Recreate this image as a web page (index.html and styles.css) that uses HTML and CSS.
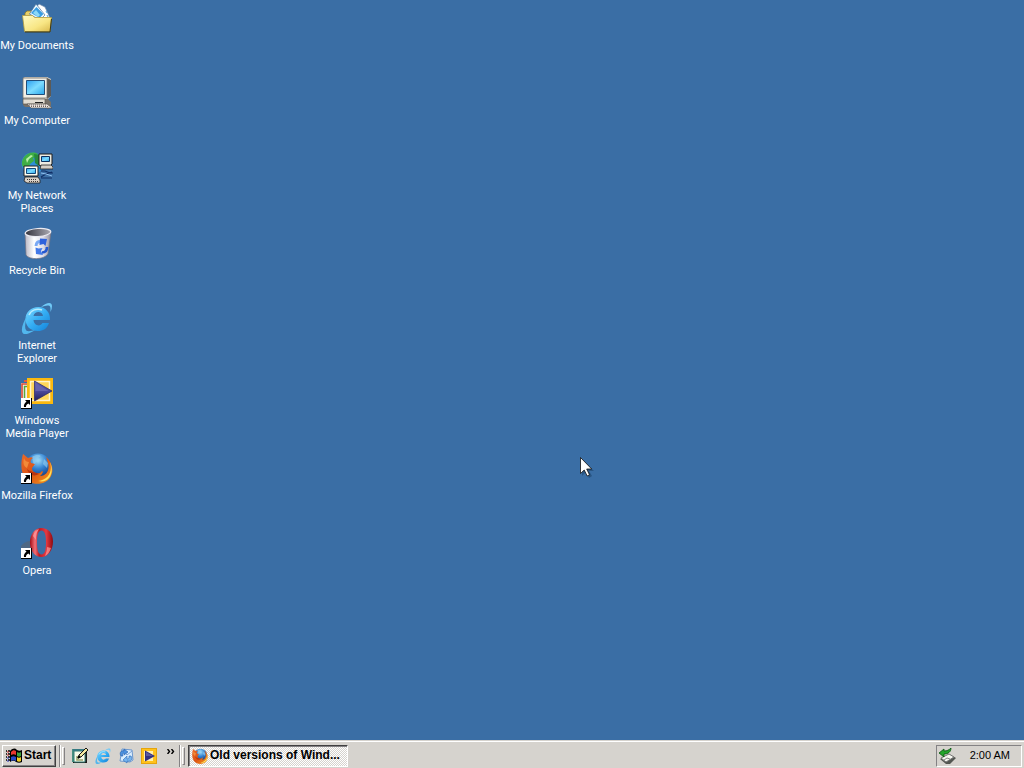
FILE: index.html
```
<!DOCTYPE html>
<html lang="en">
<head>
<meta charset="utf-8">
<title>Desktop</title>
<link rel="stylesheet" href="styles.css">
</head>
<body>
<svg class="defs" aria-hidden="true">
  <defs>
    <linearGradient id="folder" x1="0" y1="0" x2="1" y2="1"><stop offset="0" stop-color="#fffbc4"/><stop offset=".6" stop-color="#f8e684"/><stop offset="1" stop-color="#d9b84a"/></linearGradient>
    <linearGradient id="screen" x1="0" y1="0" x2="1" y2="1"><stop offset="0" stop-color="#2c9ff0"/><stop offset=".5" stop-color="#7ddcff"/><stop offset="1" stop-color="#27a4ea"/></linearGradient>
    <linearGradient id="bin" x1="0" y1="0" x2="1" y2="0"><stop offset="0" stop-color="#b9b7c4"/><stop offset=".35" stop-color="#fff"/><stop offset=".7" stop-color="#dedde8"/><stop offset="1" stop-color="#8e8c9c"/></linearGradient>
    <linearGradient id="binhole" x1="0" y1="0" x2="1" y2="0"><stop offset="0" stop-color="#34333c"/><stop offset="1" stop-color="#aaa9b3"/></linearGradient>
    <linearGradient id="ie" x1="0" y1="0" x2="1" y2="1"><stop offset="0" stop-color="#7fd9ff"/><stop offset=".5" stop-color="#35aef4"/><stop offset="1" stop-color="#1180d8"/></linearGradient>
    <linearGradient id="play" x1="0" y1="0" x2="0" y2="1"><stop offset="0" stop-color="#6464b4"/><stop offset=".5" stop-color="#4c489c"/><stop offset="1" stop-color="#221f5c"/></linearGradient>
    <radialGradient id="globe" cx=".5" cy=".25" r=".7"><stop offset="0" stop-color="#9fdcf8"/><stop offset=".45" stop-color="#3483d2"/><stop offset="1" stop-color="#0b2c74"/></radialGradient>
    <linearGradient id="fox" x1="0" y1="0" x2="1" y2="1"><stop offset="0" stop-color="#e8692a"/><stop offset=".5" stop-color="#dd5413"/><stop offset="1" stop-color="#f39a1d"/></linearGradient>
    <linearGradient id="opera" x1="0" y1="0" x2="1" y2="0"><stop offset="0" stop-color="#a80d14"/><stop offset=".22" stop-color="#f07078"/><stop offset=".4" stop-color="#c01820"/><stop offset=".7" stop-color="#e53a43"/><stop offset="1" stop-color="#8e0a10"/></linearGradient>

    <symbol id="i-shortcut" viewBox="0 0 11 11">
      <path d="M0 0h11v11H0z" fill="#000"/><path d="M0 0h10v10H0z" fill="#fff"/>
      <path d="M4 2h5v5L7.400 5.500C5.500 6.500 5 7.500 5 9H3C2.500 7 3.500 5 5.500 3.700z" fill="#000"/>
    </symbol>

    <symbol id="i-documents" viewBox="0 0 32 32">
      <path d="M4 14V11l2-2h7l2 2h11v4z" fill="#e8d06a" stroke="#8f7a25" stroke-width=".8"/>
      <path d="M8 14 18 2l6 3 5 11-4 6H12z" fill="#fff" stroke="#6585a7" stroke-width=".7"/>
      <path d="M8.500 12 15 2l9 11-5 5z" fill="#eefaff" stroke="#466f9b" stroke-width=".7"/>
      <path d="M10 11l5.500-6 7 7-4 4z" fill="#3a9de2"/><path d="M12 11l3-3 4 5-2 2z" fill="#8bd8f7"/>
      <path d="m25 9 1 2m0 2 1 2" stroke="#4aa6e3"/>
      <path d="M1.500 13.500h10l2 2h17L29 29.500H3.500z" fill="url(#folder)" stroke="#b49d3c" stroke-width=".8"/>
      <path d="M4 30h25l1.500-13" fill="none" stroke="#40380f"/>
    </symbol>

    <symbol id="i-computer" viewBox="0 0 32 32">
      <path d="m2 1 2-1h22l4 2v17l-3 3H3l-1-1z" fill="#d6d2c8"/>
      <path d="M26 1 30 3v16l-4 3z" fill="#5d5a56"/>
      <path d="M2 21V1h24v20H3z" fill="#f2efe6" stroke="#76716a" stroke-width=".8"/>
      <path d="M5.500 3.500h18v14h-18z" fill="url(#screen)" stroke="#214d79"/>
      <path d="M3 22h24l3 3v4l-3 3-3-2H4l-2-2v-3z" fill="#777169"/>
      <path d="M2 22h22v5H2z" fill="#e2ddd3" stroke="#5f5951" stroke-width=".7"/>
      <path d="M14 25.500h8" stroke="#222"/>
      <path d="m6 27h20l5 4H10z" fill="#ece5df" stroke="#504a48" stroke-width=".6"/>
      <path d="m8 28h17m-15 1.500h17" stroke="#6f6360" stroke-dasharray="1 1"/>
    </symbol>

    <symbol id="i-network" viewBox="0 0 32 32">
      <circle cx="11.500" cy="11.500" r="11" fill="#2d8fd6"/>
      <path d="M3 5C6 1 12-1 17 2l-2 3-3 1 1 3-4 3-2 5-5-2C0 12 1 8 3 5z" fill="#3fae45"/>
      <path d="m13 2 6 1 3 6-4 5-4-3z" fill="#26893c"/><path d="M5 7l5-4 2 1-4 3-2 4z" fill="#b9f0a5"/>
      <path d="M18 2h13v10l-2 2h-9l-2-1z" fill="#eeece2" stroke="#1d1c1c"/>
      <path d="M20.500 4.500h8v5h-8z" fill="url(#screen)" stroke="#0d315e"/>
      <path d="M20 13h10l2 2v2H19z" fill="#d6d0c6" stroke="#222" stroke-width=".8"/>
      <path d="M3 14h14v10H3z" fill="#fffdf2" stroke="#222"/>
      <path d="M5.500 16.500h9v5h-9z" fill="url(#screen)" stroke="#124878"/>
      <path d="M4 25h13l2 3v3H6l-3-2z" fill="#d8d0c6" stroke="#222" stroke-width=".8"/>
      <path d="M6 27.500h9m-7 2h9" stroke="#3e3635" stroke-dasharray="1 1"/>
      <path d="M20 19h4l5 2h3m-12 4 5-3 6-2m-11 6h11" fill="none" stroke="#112f67" stroke-width="1.200"/>
      <path d="M20 21l5 1 6 2" fill="none" stroke="#8cbced"/>
    </symbol>

    <symbol id="i-recycle" viewBox="0 0 32 32">
      <path d="M4 6 5 28c3 5 18 5 22-1L30 5z" fill="url(#bin)" stroke="#737283" stroke-width=".7"/>
      <ellipse cx="17" cy="5.500" rx="12.800" ry="4" transform="rotate(-4 17 5.500)" fill="url(#binhole)" stroke="#ecebf2" stroke-width="1.200"/>
      <path d="M15 19c0-3 2-5 5-4.500" fill="none" stroke="#7aa9f5" stroke-width="3"/>
      <path d="M19 11.500l7 .5-1.500 7-2-2-4 1z" fill="#2f62dc"/>
      <path d="M26 20c0 4-2 5.500-5 5.500" fill="none" stroke="#2457cf" stroke-width="2.600"/>
      <path d="M22 28l-7-1-.5-6.500 3 1 4-.5-1.500 3z" fill="#4379e8"/>
    </symbol>

    <symbol id="i-ie" viewBox="0 0 32 32">
      <path d="M29 18H12.500c.5 6 7 7 9 3H28c-2 6-6 8-11 8C9 29 4.500 24 4.500 17S10 5 17.500 5C25 5 29.500 11 29 18zM12.500 14H22c-.4-5-8.500-5.500-9.500 0z" fill="url(#ie)" fill-rule="evenodd"/>
      <path d="M20 5C26 0 31 0 31 4c0 2-.5 4-1.500 6 0-3 .5-6-2-6.500-2-.4-4 .5-7.500 1.500z" fill="#70c9f7"/>
      <path d="M6 14C1 22-1 30 3 32c3 1 8-2 11-4-4 1-8 2-9 0-2-3 0-9 1-14z" fill="#52b7ee"/>
      <path d="M8 13c2-5 8-7 13-5" fill="none" stroke="#b8ecff" stroke-width="1.500"/>
    </symbol>

    <symbol id="i-media" viewBox="0 0 32 32">
      <path d="M0 6h6v20H0z" fill="#f5f1ed"/><path d="M1 22V7h5" fill="none" stroke="#d64a31" stroke-width="1.600"/>
      <path d="M3.500 22V9.500H6" fill="none" stroke="#58a83c" stroke-width="1.500"/><path d="M3 3h4v2H3z" fill="#e15c39"/>
      <path d="M6 1h26v26H6z" fill="#fbb90f"/><path d="M9.500 4.500h19v19h-19z" fill="#ffd659" stroke="#fff3cf" stroke-width="1.500"/>
      <path d="M13.500 4 31 14 13.500 24z" fill="url(#play)" stroke="#22216a" stroke-width=".7"/><path d="M14.500 6v8h13z" fill="#6663ae"/>
    </symbol>

    <symbol id="i-play" viewBox="0 0 16 16">
      <path d="M0 0h16v16H0z" fill="#e6a50c"/><path d="M1 1h14v14H1z" fill="#ffc21c"/><path d="M3 3h9v10H3z" fill="#fff0b3"/>
      <path d="M4 2.500 14 8 4 13.500z" fill="#34317f"/><path d="M5 4v4h7z" fill="#5c5a9d"/>
    </symbol>

    <symbol id="i-firefox" viewBox="0 0 32 32">
      <circle cx="17" cy="15" r="13.500" fill="url(#globe)"/>
      <path d="M11 5c4-3 8-2 9-1l-3 2 3 3-5 1-2 4zM23 7l4 4-1 5-4-4z" fill="#8fcdf1" opacity=".65"/>
      <path d="M2 2c2 1 3 3 5 4 2-1 4-1 5 0-2 1-3 3-2 5l4 1-3 4c0 4 4 6 8 5l2-2c2 0 0 4-2 5 7 0 10-7 8-13l-2-6c6 5 8 13 5 19C26 33 11 35 4 26-1 19 0 9 2 2z" fill="url(#fox)"/>
      <path d="M29 10c3 10-2 18-12 19C28 32 34 20 29 10z" fill="#ffe05b"/>
      <path d="M3 6c1 3 3 4 5 4l-2 6c-4-2-4-6-3-10z" fill="#f28a38"/>
      <path d="M6 17c3 3 8 3 12 5-5 3-10 1-12-5z" fill="#b93410"/>
    </symbol>

    <symbol id="i-opera" viewBox="0 0 32 32">
      <path d="M0 19c3-4 7-5 10-5v13H1z" fill="#5b6470" opacity=".6"/>
      <path fill-rule="evenodd" d="M20.500 1C27 1 32 6 32 14.500S27 30 20.500 30 9 24 9 15.500 14 1 20.500 1zm0 2.500c-3.500 0-4.500 5-4.500 12s1 12 4.500 12 4.500-5 4.500-12-1-12-4.500-12z" fill="url(#opera)"/>
      <path d="M12 9c1-4 3-6 6-7-3 4-3 8-3 11" fill="#ff979c" opacity=".8"/>
      <path d="m26 20 4 1c-1 4-4 7-6 8 1-3 2-5 2-9z" fill="#ffa5a5" opacity=".65"/>
    </symbol>

    <symbol id="i-windows" viewBox="0 0 17 16">
      <path d="M0 3h1m1 0h2M0 6h1m1 0h2M0 9h1m1 0h2M0 12h1m1 0h2" stroke="#000" stroke-width="1.400"/>
      <path d="M4 3c3-3 5-3 7-1 2 1 3 1 5 0v12c-2 1-4 1-6 0-2-2-4-1-6 0z" fill="#000"/>
      <path d="M5 4c2-2 3-2 5-1v4C8 6 7 6 5 7z" fill="#e9382f"/><path d="M11 4c1 1 3 1 4 0v4c-1 1-3 1-4 0z" fill="#3aa13c"/>
      <path d="M5 9c2-1 3-1 5 0v4c-2-1-3-1-5 0z" fill="#2848c5"/><path d="M11 9c1 1 3 1 4 0v4c-1 1-3 1-4 0z" fill="#f1cf29"/>
      <path d="M1 4h2M1 7h2" stroke="#d42d2d"/><path d="M1 10h2M1 13h2" stroke="#2936bd"/>
    </symbol>

    <symbol id="i-show" viewBox="0 0 16 16">
      <path d="M1 2h14v13H1z" fill="#1d1d1a"/><path d="M0 1h3v13H0z" fill="#488f80"/><path d="M2 3h11v11H2z" fill="#f8fbea" stroke="#347d77"/>
      <path d="M1 2h12" stroke="#367a83" stroke-width="2"/><path d="M5 8v4h6" fill="none" stroke="#98a16a" stroke-width="1.500"/>
      <path d="m6 10 1-3 7-7 2 2-7 7z" fill="#f4e9a0" stroke="#181818"/><path d="M6 10l2-2" stroke="#000" stroke-width="2"/>
    </symbol>

    <symbol id="i-outlook" viewBox="0 0 16 16">
      <path d="m4 1 10 1 1 10-3 2-10-1z" fill="#dbeeff" stroke="#6b97ce"/>
      <path d="m5 2 4 5 5-4" fill="none" stroke="#7a9fd6"/>
      <path d="M3 8C1 5 3 2 6 3V1l4 3-4 3V5C5 5 4 6 5 8z" fill="#4c91df" stroke="#2660ac" stroke-width=".6"/>
      <path d="M13 8c2 3 0 6-4 5v2l-4-3 4-4v3c2 0 2-1 2-3z" fill="#76b4ef" stroke="#2c69b5" stroke-width=".6"/>
    </symbol>

    <symbol id="i-eject" viewBox="0 0 17 16">
      <path d="M1 11 10 6l7 4-6 6H7z" fill="#535651"/><path d="m2 10 8-4 5 3-8 5z" fill="#f7f7f0" stroke="#777"/><path d="m5 12 3-2 3 1" fill="none" stroke="#888"/>
      <path d="M0 5 5 1v2c3 0 5-1 7-3 0 4-3 6-7 6v3z" fill="#24a52b" stroke="#07530e" stroke-width=".8"/>
    </symbol>
  </defs>
</svg>

<main class="desktop">
  <nav class="icons" aria-label="Desktop">
    <a class="item" href="#"><svg class="icon"><use href="#i-documents"/></svg><span>My Documents</span></a>
    <a class="item" href="#"><svg class="icon"><use href="#i-computer"/></svg><span>My Computer</span></a>
    <a class="item" href="#"><svg class="icon"><use href="#i-network"/></svg><span>My Network<br>Places</span></a>
    <a class="item" href="#"><svg class="icon"><use href="#i-recycle"/></svg><span>Recycle Bin</span></a>
    <a class="item" href="#"><svg class="icon"><use href="#i-ie"/></svg><span>Internet<br>Explorer</span></a>
    <a class="item" href="#"><svg class="icon"><use href="#i-media"/><use href="#i-shortcut" y="21" width="11" height="11"/></svg><span>Windows<br>Media Player</span></a>
    <a class="item" href="#"><svg class="icon"><use href="#i-firefox"/><use href="#i-shortcut" y="21" width="11" height="11"/></svg><span>Mozilla Firefox</span></a>
    <a class="item" href="#"><svg class="icon"><use href="#i-opera"/><use href="#i-shortcut" y="21" width="11" height="11"/></svg><span>Opera</span></a>
  </nav>
  <svg class="cursor" viewBox="0 0 14 22" aria-hidden="true">
    <path d="M2 2v17l4-4 3 6 3-2-3-5h5z" fill="#173b61" opacity=".5"/>
    <path d="M.5.5v16l3.700-3.500 3 6 2.300-1.200-2.800-5.800h5z" fill="#fff" stroke="#111" stroke-width=".8"/>
  </svg>
</main>

<footer class="taskbar">
  <button class="start"><svg class="flag"><use href="#i-windows"/></svg>Start</button>
  <span class="rule"></span><span class="grip"></span>
  <div class="quick">
    <button class="launch" aria-label="Show Desktop"><svg class="small"><use href="#i-show"/></svg></button>
    <button class="launch" aria-label="Internet Explorer"><svg class="small"><use href="#i-ie"/></svg></button>
    <button class="launch" aria-label="Outlook Express"><svg class="small"><use href="#i-outlook"/></svg></button>
    <button class="launch" aria-label="Windows Media Player"><svg class="small"><use href="#i-play"/></svg></button>
  </div>
  <button class="more" aria-label="More"><svg class="chevrons" viewBox="0 0 8 5"><path d="m.5 0 2 2.500-2 2.500M4.500 0l2 2.500-2 2.500" fill="none" stroke="#000" stroke-width="1.400"/></svg></button>
  <span class="rule"></span><span class="grip"></span>
  <button class="task"><svg class="small"><use href="#i-firefox"/></svg><span class="title">Old versions of Wind...</span></button>
  <div class="tray"><svg class="eject" role="img" aria-label="Safely remove hardware"><use href="#i-eject"/></svg><time>2:00 AM</time></div>
</footer>
</body>
</html>
```
FILE: styles.css
```
* { box-sizing: border-box; }

body {
  margin: 0;
  min-height: 100vh;
  display: flex;
  flex-direction: column;
  background: #3a6ea5;
  font: 11px/13px "Liberation Sans", Arial, sans-serif;
  color: #000;
}

button {
  font: inherit;
  color: inherit;
  border: 0;
  padding: 0;
  background: none;
}

.defs { position: absolute; width: 0; height: 0; }

.desktop { flex: 1; position: relative; }

.icons {
  display: grid;
  grid-auto-rows: 75px;
  grid-template-columns: 74px;
}

.item {
  display: flex;
  flex-direction: column;
  align-items: center;
  gap: 5px;
  padding-top: 2px;
  color: #fff;
  font-family: Roboto, "Liberation Sans", sans-serif;
  text-align: center;
  text-decoration: none;
  white-space: nowrap;
}

.icon { width: 32px; height: 32px; overflow: visible; }

.cursor {
  position: absolute;
  left: 580px;
  top: 457px;
  width: 14px;
  height: 22px;
}

.taskbar {
  display: flex;
  align-items: center;
  height: 28px;
  padding: 2px 2px 0;
  background: #d6d3ce;
  border-top: 1px solid #d6d3ce;
  box-shadow: inset 0 1px #fff;
}

.start {
  display: flex;
  align-items: center;
  gap: 1px;
  height: 22px;
  width: 54px;
  padding-left: 3px;
  font-size: 12px;
  font-weight: bold;
  background: #d6d3ce;
  border: 1px solid;
  border-color: #fff #404040 #404040 #fff;
  box-shadow: inset -1px -1px #848284;
}

.flag { width: 17px; height: 16px; flex: none; }

.rule {
  width: 2px;
  height: 22px;
  margin-left: 3px;
  border-left: 1px solid #848284;
  border-right: 1px solid #fff;
}

.grip {
  width: 3px;
  height: 18px;
  margin-left: 1px;
  border: 1px solid;
  border-color: #fff #848284 #848284 #fff;
}

.quick { display: flex; gap: 7px; margin-left: 7px; }

.launch, .small { display: block; width: 16px; height: 16px; flex: none; }

.more { align-self: flex-start; width: 9px; margin: 6px 0 0 10px; }

.chevrons { display: block; width: 8px; height: 5px; }

.task {
  display: flex;
  align-items: center;
  gap: 2px;
  width: 160px;
  height: 22px;
  margin-left: 3px;
  padding: 0 4px 0 3px;
  font-size: 12px;
  font-weight: bold;
  text-align: left;
  border: 1px solid;
  border-color: #404040 #fff #fff #404040;
  box-shadow: inset 1px 1px #848284;
  background: repeating-conic-gradient(#fff 0 25%, #d6d3ce 0 50%) 0 0 / 2px 2px;
}

.title {
  min-width: 0;
  overflow: hidden;
  white-space: nowrap;
  text-overflow: ellipsis;
}

.tray {
  display: flex;
  align-items: center;
  gap: 14px;
  height: 22px;
  margin-left: auto;
  padding: 0 11px 0 2px;
  border: 1px solid;
  border-color: #848284 #fff #fff #848284;
}

.eject { width: 17px; height: 16px; }
```
